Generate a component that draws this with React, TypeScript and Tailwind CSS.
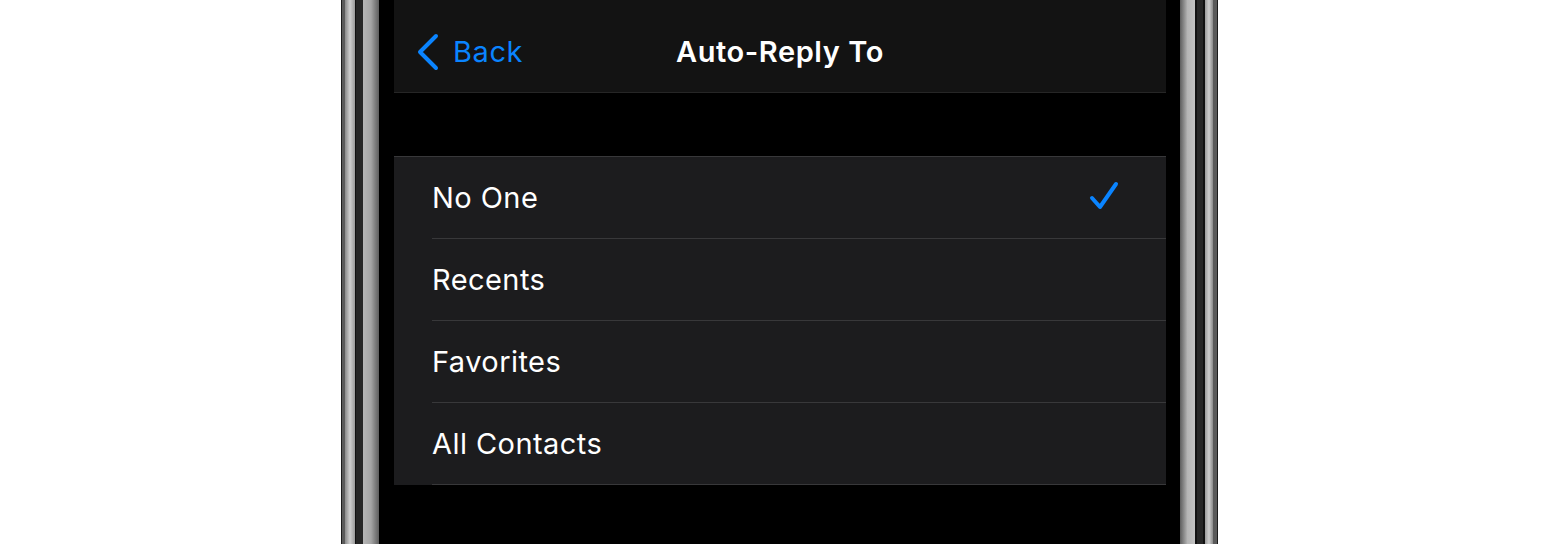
import React from "react";

const rows = ["No One", "Recents", "Favorites", "All Contacts"];

function Chevron() {
  return (
    <svg width="24" height="38" viewBox="0 0 24 38" fill="none">
      <polyline
        points="21,3 5,19 21,35"
        stroke="#0a84ff"
        strokeWidth="4"
        strokeLinecap="round"
        strokeLinejoin="round"
      />
    </svg>
  );
}

function Check() {
  return (
    <svg width="34" height="34" viewBox="0 0 34 34" fill="none">
      <polyline
        points="4,17 12,26 28,3"
        stroke="#0a84ff"
        strokeWidth="4"
        strokeLinecap="round"
        strokeLinejoin="round"
      />
    </svg>
  );
}

export default function App() {
  return (
    <div
      className="flex h-[544px] w-[1560px] overflow-hidden bg-white"
      style={{ fontFamily: "Inter, 'Noto Sans', sans-serif" }}
    >
      <div className="w-[341px] shrink-0 bg-white" />

      {/* left bezel */}
      <div className="flex shrink-0">
        <div className="w-px bg-[#1c1c1c]" />
        <div className="w-[3px] bg-[#5a5a5a]" />
        <div className="w-[10px] bg-gradient-to-r from-[#8a8a8a] via-[#cfcfcf] to-[#9a9a9a]" />
        <div className="w-px bg-[#111]" />
        <div className="w-[7px] bg-[#262626]" />
        <div className="w-[16px] bg-gradient-to-r from-[#b5b5b5] via-[#a5a5a5] to-[#5e5e5e]" />
      </div>

      {/* screen */}
      <div className="flex w-[801px] shrink-0 flex-col bg-black pl-[15px] pr-[14px]">
        <div className="relative flex h-[93px] items-center border-b border-[#262626] bg-[#131313] pt-[12px]">
          <div className="flex items-center gap-[14px] pl-[21px] text-[29px] tracking-[0.02em] text-[#0a84ff]">
            <Chevron />
            <span>Back</span>
          </div>
          <div className="absolute inset-x-0 top-[12px] bottom-0 flex items-center justify-center text-[29px] font-semibold tracking-[0.02em] text-white">
            Auto-Reply To
          </div>
        </div>

        <div className="mt-[63px] border-t border-[#38383a] bg-[#1c1c1e]">
          {rows.map((r, i) => (
            <div key={r} className="pl-[38px]">
              <div className="flex h-[82px] items-center justify-between border-b border-[#38383a] pr-[44px] text-[29px] tracking-[0.015em] text-white">
                <span>{r}</span>
                {i === 0 && <Check />}
              </div>
            </div>
          ))}
        </div>
      </div>

      {/* right bezel */}
      <div className="flex shrink-0">
        <div className="w-[15px] bg-gradient-to-r from-[#5e5e5e] via-[#b5b5b5] to-[#c2c2c2]" />
        <div className="w-[2px] bg-[#111]" />
        <div className="w-[6px] bg-[#262626]" />
        <div className="w-[2px] bg-[#111]" />
        <div className="w-[8px] bg-gradient-to-r from-[#9a9a9a] via-[#cfcfcf] to-[#8a8a8a]" />
        <div className="w-[4px] bg-[#5a5a5a]" />
        <div className="w-px bg-[#1c1c1c]" />
      </div>

      <div className="flex-1 bg-white" />
    </div>
  );
}
